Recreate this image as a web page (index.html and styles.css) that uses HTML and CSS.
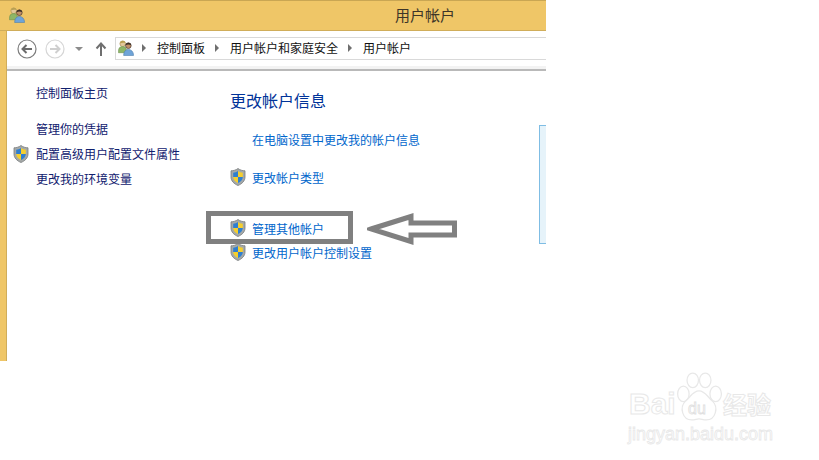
FILE: index.html
```html
<!DOCTYPE html>
<html>
<head>
<meta charset="utf-8">
<title>用户帐户</title>
<link rel="stylesheet" href="styles.css">
</head>
<body>
  <svg class="defs" width="0" height="0">
    <symbol id="shield" viewBox="0 0 16 18">
      <path d="M8 .5C6 2 3.500 2.800 1 2.800V9c0 4 3 6.800 7 8.500 4-1.700 7-4.500 7-8.500V2.800C12.500 2.800 10 2 8 .5z" fill="#a5a9a8" stroke="#777b7c" stroke-width=".8"/>
      <path d="M8 3C6.400 4 4.900 4.500 3.200 4.700V9H8z" fill="#2f7fd0"/>
      <path d="M8 3c1.600 1 3.100 1.500 4.800 1.700V9H8z" fill="#f6cf2e"/>
      <path d="M3.200 9c.2 2.900 2.200 4.900 4.800 6.100V9z" fill="#f6cf2e"/>
      <path d="M12.800 9c-.2 2.900-2.200 4.900-4.800 6.100V9z" fill="#2f7fd0"/>
    </symbol>
    <symbol id="users" viewBox="0 0 17 17">
      <circle cx="5" cy="4" r="3" fill="#e3c89a" stroke="#a88f55" stroke-width=".7"/>
      <path d="M2.200 3.500C2.500 1.500 4 .8 5.200.8s2.500.8 2.700 2.500C6.500 2.600 4 2.600 2.200 3.500z" fill="#b9a050"/>
      <path d="M.5 12c0-3.500 1.500-5 4.500-5s4 1.500 4 5v1.500H.5z" fill="#8eb667" stroke="#6d8f4c" stroke-width=".6"/>
      <circle cx="11" cy="6" r="3" fill="#c08f68" stroke="#3f332c" stroke-width=".7"/>
      <path d="M8 5.500C8.300 3.500 9.800 2.800 11 2.800s2.700.7 3 2.700c-1.500-.8-4.500-.8-6 0z" fill="#3a2d26"/>
      <path d="M6 16c0-3.500 2-6 5-6s5.500 2.500 5.500 6v.5H6z" fill="#6fa4d8" stroke="#4b7cab" stroke-width=".6"/>
    </symbol>
  </svg>

  <div class="window">
    <header class="titlebar">
      <svg class="icon-users"><use href="#users"/></svg>
      <span class="title">用户帐户</span>
    </header>
    <div class="client">
      <div class="toolbar">
        <svg class="nav-btn" viewBox="0 0 20 20"><circle cx="10" cy="10" r="9" fill="#fff" stroke="#7d7d7d" stroke-width="1.200"/><path d="M15 10H6M9.500 6L5.500 10l4 4" fill="none" stroke="#6b6b6b" stroke-width="2"/></svg>
        <svg class="nav-btn" viewBox="0 0 20 20"><circle cx="10" cy="10" r="9" fill="#fff" stroke="#d6d6d6" stroke-width="1.200"/><path d="M5 10h9M10.500 6l4 4-4 4" fill="none" stroke="#cfcfcf" stroke-width="2"/></svg>
        <span class="drop"></span>
        <svg class="up" viewBox="0 0 12 14"><path d="M6 14V2M1.500 6.500L6 1.500l4.500 5" fill="none" stroke="#6f6f6f" stroke-width="2"/></svg>
        <div class="address">
          <svg class="icon-users"><use href="#users"/></svg>
          <span class="crumb-arrow"></span>
          <span>控制面板</span>
          <span class="crumb-arrow"></span>
          <span>用户帐户和家庭安全</span>
          <span class="crumb-arrow"></span>
          <span>用户帐户</span>
        </div>
      </div>
      <div class="content">
        <nav class="side">
          <a class="side-home">控制面板主页</a>
          <a class="side-link">管理你的凭据</a>
          <a class="side-link"><svg class="shield"><use href="#shield"/></svg>配置高级用户配置文件属性</a>
          <a class="side-link">更改我的环境变量</a>
        </nav>
        <main class="main">
          <h1>更改帐户信息</h1>
          <a class="task task-plain">在电脑设置中更改我的帐户信息</a>
          <a class="task task-type"><svg class="shield"><use href="#shield"/></svg>更改帐户类型</a>
          <a class="task task-other"><svg class="shield"><use href="#shield"/></svg>管理其他帐户</a>
          <a class="task task-uac"><svg class="shield"><use href="#shield"/></svg>更改用户帐户控制设置</a>
        </main>
        <div class="strip"></div>
      </div>
    </div>
  </div>

  <!-- annotation drawn over the screenshot -->
  <div class="mark-box"></div>
  <svg class="mark-arrow" viewBox="0 0 90 32"><path d="M4 16L44 3.500V10H87.500V22H44v6.500z" fill="#fff" stroke="#808080" stroke-width="5"/></svg>

  <div class="watermark">
    <svg class="paw" viewBox="0 0 44 48" fill="#fff" stroke="#e8e8e8" stroke-width="1.200">
      <ellipse cx="7" cy="21" rx="5.500" ry="7.500"/>
      <ellipse cx="16" cy="8" rx="5.500" ry="7"/>
      <ellipse cx="28" cy="8" rx="5.500" ry="7"/>
      <ellipse cx="38" cy="21" rx="5.500" ry="7.500"/>
      <path d="M22 18c6 0 8 6 13 10 6 6 3 18-6 18-3 0-5-1-7-1s-4 1-7 1c-9 0-12-12-6-18 5-4 7-10 13-10z"/>
    </svg>
    <span class="wm-bai">Bai</span>
    <span class="wm-du">du</span>
    <span class="wm-jy">经验</span>
    <span class="wm-url">jingyan.baidu.com</span>
  </div>
</body>
</html>
```

FILE: styles.css
```css
* {
  box-sizing: border-box;
}

body {
  margin: 0;
  height: 460px;
  overflow: hidden;
  background: #fff;
  font-family: "Noto Sans CJK SC", "Liberation Sans", sans-serif;
  font-size: 12px;
  color: #1a1a1a;
}

.defs {
  display: block;
  height: 0;
}

.window {
  width: 546px;
  height: 361px;
  background: #efc667;
  border-top: 1px solid #c9a653;
  display: flex;
  flex-direction: column;
}

/* Title bar */
.titlebar {
  height: 30px;
  display: flex;
  align-items: center;
  padding: 0 0 2px 9px;
  border-bottom: 1px solid #d0ad5a;
}

.title {
  margin-left: 370px;
  font-size: 15px;
  line-height: 20px;
  color: #3d3528;
}

.icon-users {
  width: 16px;
  height: 16px;
  flex: none;
}

.client {
  flex: 1;
  margin-left: 6px;
  background: #fff;
  border-left: 1px solid #d0ad5a;
  display: flex;
  flex-direction: column;
}

/* Navigation toolbar */
.toolbar {
  height: 40px;
  flex: none;
  display: flex;
  align-items: center;
  padding: 1px 0 4px 10px;
  border-bottom: 2px solid #b9b9b9;
  box-shadow: inset 0 -3px 0 #f3f3f3;
}

.nav-btn {
  width: 20px;
  height: 20px;
  margin-right: 8px;
  flex: none;
}

.drop {
  width: 0;
  height: 0;
  margin: 0 12px 0 2px;
  border-left: 4px solid transparent;
  border-right: 4px solid transparent;
  border-top: 4px solid #8c8c8c;
}

.up {
  width: 12px;
  height: 14px;
  flex: none;
}

.address {
  height: 23px;
  flex: 1;
  margin-left: 8px;
  padding: 0 0 2px 2px;
  display: flex;
  align-items: center;
  border: 1px solid #d9d9d9;
  border-right: none;
  color: #111;
  line-height: 16px;
}

.crumb-arrow {
  width: 0;
  height: 0;
  margin: 0 11px 0 10px;
  border-top: 4px solid transparent;
  border-bottom: 4px solid transparent;
  border-left: 4px solid #6f6f6f;
}

.address .icon-users + .crumb-arrow {
  margin-left: 8px;
}

/* Page body */
.content {
  flex: 1;
  display: grid;
  grid-template-columns: 223px 309px 7px;
}

.side {
  display: flex;
  flex-direction: column;
  padding: 14px 0 0 29px;
  color: #10206e;
}

.side-home,
.side-link {
  line-height: 16px;
  white-space: nowrap;
}

.side-link {
  display: block;
  margin-bottom: 9px;
  position: relative;
}

.side-home {
  margin-bottom: 20px;
}

.side .shield {
  position: absolute;
  left: -23px;
  top: -1px;
}

.shield {
  width: 16px;
  height: 18px;
  flex: none;
}

.main {
  padding-top: 18px;
}

.main h1 {
  margin: 0 0 19px;
  font-size: 16px;
  font-weight: 400;
  line-height: 22px;
  color: #003399;
}

.task {
  display: flex;
  align-items: center;
  gap: 6px;
  height: 18px;
  color: #0066cc;
  white-space: nowrap;
}

.task-plain {
  padding-left: 22px;
}

.task-type {
  margin-top: 20px;
}

.task-other {
  margin-top: 33px;
}

.task-uac {
  margin-top: 6px;
}

.strip {
  margin-top: 54px;
  height: 119px;
  background: #e6f3fa;
  border: 1px solid #7fbde4;
  border-right: none;
}

/* Annotation on top of the screenshot */
.mark-box {
  position: absolute;
  left: 206px;
  top: 211px;
  width: 147px;
  height: 33px;
  border: 5px solid #808080;
}

.mark-arrow {
  position: absolute;
  left: 367px;
  top: 213px;
  width: 90px;
  height: 32px;
}

/* Watermark in the corner */
.watermark {
  position: absolute;
  left: 620px;
  top: 370px;
  width: 199px;
  height: 90px;
  color: #fff;
  font-family: "Liberation Sans", sans-serif;
  -webkit-text-stroke: 1px #e8e8e8;
}

.paw {
  position: absolute;
  left: 56px;
  top: 2px;
  width: 46px;
  height: 50px;
}

.wm-bai,
.wm-du,
.wm-jy,
.wm-url {
  position: absolute;
  white-space: nowrap;
}

.wm-bai {
  left: 9px;
  top: 16px;
  font-size: 30px;
  line-height: 36px;
  font-weight: 700;
}

.wm-du {
  left: 68px;
  top: 30px;
  font-size: 16px;
  line-height: 18px;
  -webkit-text-stroke: .8px #e0e0e0;
}

.wm-jy {
  left: 103px;
  top: 20px;
  font-family: "Noto Sans CJK SC", sans-serif;
  font-size: 24px;
  line-height: 28px;
  font-weight: 700;
}

.wm-url {
  left: 8px;
  top: 53px;
  font-size: 18px;
  line-height: 22px;
  -webkit-text-stroke: .8px #e8e8e8;
}
```
